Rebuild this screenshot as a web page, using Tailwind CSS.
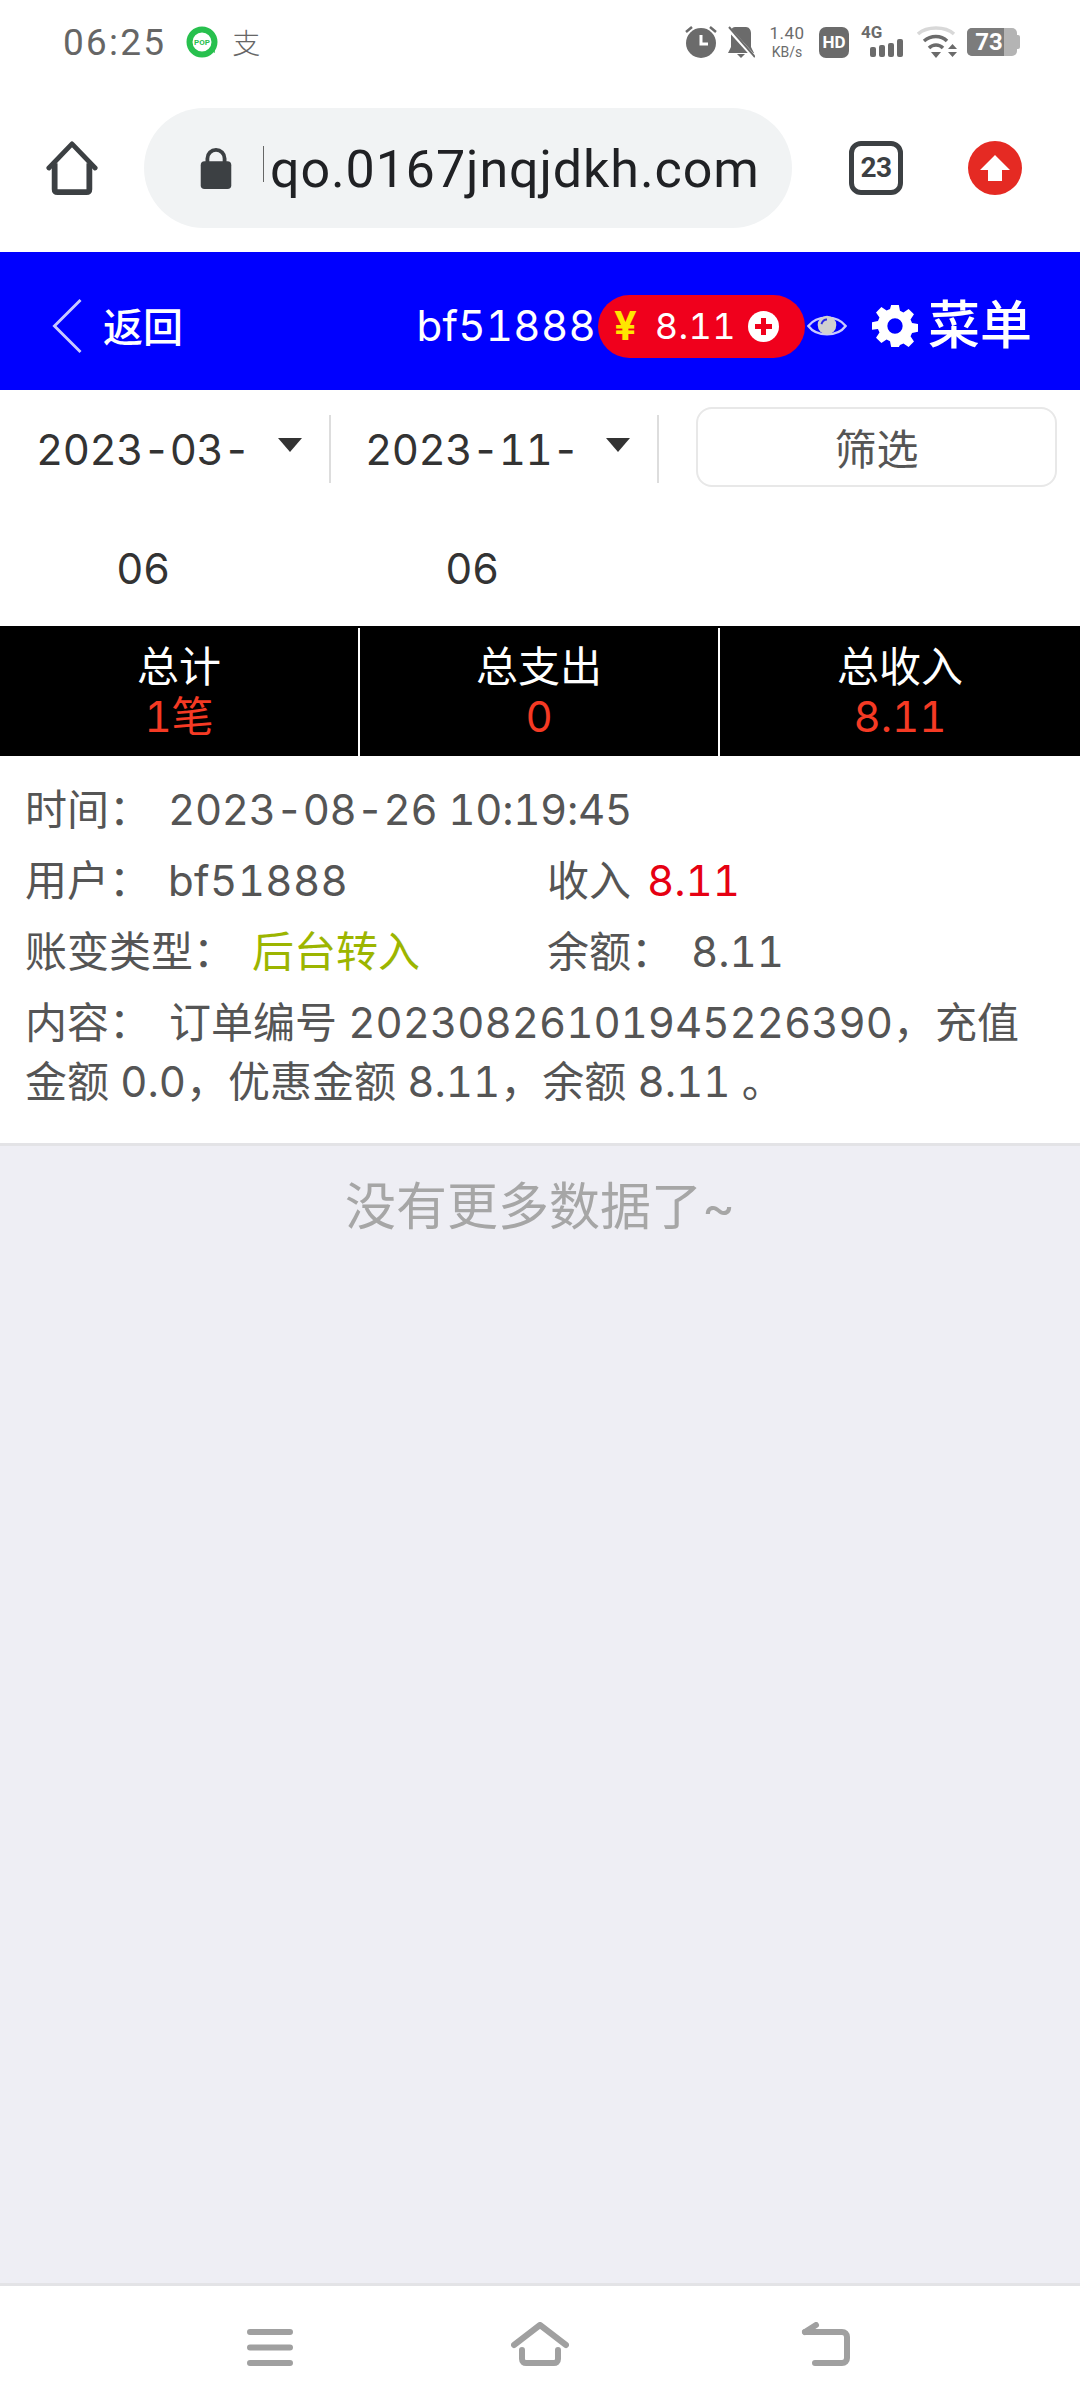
<!DOCTYPE html>
<html lang="zh-CN">
<head>
    <meta charset="UTF-8">
    <meta name="viewport" content="width=device-width, initial-scale=1.0">
    <title>账变记录</title>
    <script src="https://cdn.jsdelivr.net/npm/@tailwindcss/browser@4"></script>
</head>
<body class="bg-white font-['Inter','Noto_Sans_CJK_SC',sans-serif] tabular-nums">
<div class="w-[1080px] h-[2408px] flex flex-col overflow-hidden">

    <!-- Status bar -->
    <div class="h-[88px] shrink-0 flex items-center justify-between pl-[63px] pr-[60px] pb-[4px] text-[#666]">
        <div class="flex items-center">
            <span class="text-[37px] leading-none font-['Roboto',sans-serif] tracking-[2.2px]">06:25</span>
            <svg class="ml-[20px]" width="32" height="32" viewBox="0 0 32 32"><circle cx="16" cy="16" r="12.5" fill="#fff" stroke="#28c04e" stroke-width="6"/><path d="M24 24l5 3-1-6z" fill="#28c04e"/><text x="16" y="19" text-anchor="middle" font-size="8" font-weight="700" fill="#28c04e" font-family="Roboto">POP</text></svg>
            <span class="ml-[14px] text-[28px] leading-none font-['Noto_Sans_CJK_SC'] font-light">支</span>
        </div>
        <div class="flex items-center">
            <svg width="34" height="34" viewBox="0 0 34 34"><circle cx="17" cy="18" r="15" fill="#6b6b6b"/><path d="M17 10v9h7" fill="none" stroke="#fff" stroke-width="3"/><path d="M2 7l6-5M32 7l-6-5" stroke="#6b6b6b" stroke-width="2.5"/></svg>
            <svg class="ml-[9px]" width="28" height="34" viewBox="0 0 28 34"><path d="M8 2h11c3 0 5 3 5 6v14l3 6H1l3-6V8c0-3 1-6 4-6zM10 29h8l-4 4z" fill="#6b6b6b"/><path d="M1 3l26 29" stroke="#fff" stroke-width="4"/><path d="M2 2l26 30" stroke="#6b6b6b" stroke-width="2"/></svg>
            <div class="ml-[12px] w-[40px] flex flex-col items-center text-[#6b6b6b] font-['Roboto',sans-serif]">
                <span class="text-[17px] leading-[20px] tracking-[0.5px]">1.40</span>
                <span class="text-[14px] leading-[18px]">KB/s</span>
            </div>
            <div class="ml-[12px] w-[30px] h-[31px] rounded-[7px] bg-[#6b6b6b] flex items-center justify-center text-white text-[17px] font-bold leading-none font-['Roboto',sans-serif]">HD</div>
            <div class="ml-[12px] w-[44px] h-[34px] relative text-[#6b6b6b] font-['Roboto',sans-serif]">
                <span class="absolute left-0 top-[-3px] text-[17px] font-bold leading-[20px]">4G</span>
                <svg class="absolute left-0 top-0" width="44" height="34" viewBox="0 0 44 34"><rect x="9" y="22" width="6" height="10" rx="2" fill="#6b6b6b"/><rect x="18" y="20" width="6" height="12" rx="2" fill="#6b6b6b"/><rect x="27" y="18" width="6" height="14" rx="2" fill="#6b6b6b"/><rect x="36" y="14" width="6" height="18" rx="2" fill="#6b6b6b"/></svg>
            </div>
            <svg class="ml-[12px]" width="40" height="34" viewBox="0 0 40 34"><path d="M1 9C10 1 28 1 37 9" fill="none" stroke="#d8d8d8" stroke-width="3.5"/><path d="M7 16c7-6 17-6 23 0" fill="none" stroke="#6b6b6b" stroke-width="3.5"/><path d="M12 23c4-4 10-4 14 0" fill="none" stroke="#6b6b6b" stroke-width="3.5"/><path d="M14 27h10l-5 6z" fill="#6b6b6b"/><path d="M31 24h9l-4.500-5zM31 27h9l-4.500 5z" fill="#6b6b6b"/></svg>
            <div class="ml-[10px] relative w-[50px] h-[28px] rounded-[5px] overflow-hidden bg-[#b4b4b4] flex items-center">
                <div class="absolute left-0 top-0 h-full w-[37px] bg-[#7c7c7c]"></div>
                <span class="relative w-[44px] text-center text-white text-[24px] font-bold leading-none font-['Roboto',sans-serif]">73</span>
            </div>
            <div class="w-[3px] h-[14px] rounded-r-[2px] bg-[#b4b4b4]"></div>
        </div>
    </div>

    <!-- Browser bar -->
    <div class="h-[164px] shrink-0 flex items-center pl-[45px] pb-[4px]">
        <svg width="54" height="54" viewBox="0 0 54 56"><path d="M3 28L27 3l24 25" fill="none" stroke="#3c4043" stroke-width="5" stroke-linecap="round" stroke-linejoin="round"/><path d="M9 23v27c0 2 1 3 3 3h30c2 0 3-1 3-3V23" fill="none" stroke="#3c4043" stroke-width="6"/></svg>
        <div class="ml-[45px] w-[648px] h-[120px] rounded-full bg-[#f1f3f4] flex items-center pl-[56px]">
            <svg width="32" height="42" viewBox="0 0 32 44"><path d="M7 16V12a9 9 0 0 1 18 0v4" fill="none" stroke="#3c4043" stroke-width="4"/><rect x="0" y="15" width="32" height="29" rx="4" fill="#3c4043"/></svg>
            <span class="ml-[38px] mt-[3px] text-[52px] leading-none text-[#202124] font-['Roboto',sans-serif] relative tracking-[0.9px]">qo.0167jnqjdkh.com<span class="absolute left-[-7px] top-[2px] h-[36px] border-l border-[#666]"></span></span>
        </div>
        <div class="ml-[57px] w-[54px] h-[54px] rounded-[12px] border-[5px] border-[#3c4043] flex items-center justify-center text-[#3c4043] text-[28px] font-bold leading-none font-['Roboto',sans-serif] tracking-[-0.5px]">23</div>
        <div class="ml-[65px] w-[54px] h-[54px] rounded-full bg-[#e52a23] flex items-center justify-center">
            <svg width="30" height="28" viewBox="0 0 30 28"><path d="M15 1L30 16H22V27H8V16H0z" fill="#fff"/></svg>
        </div>
    </div>

    <!-- Blue header -->
    <div class="h-[138px] shrink-0 bg-[#0000ff] flex items-center justify-between pl-[52px] pr-[48px] pt-[10px] text-white">
        <div class="flex items-center">
            <svg width="30" height="56" viewBox="0 0 30 58"><path d="M29 2L2 29l27 27" fill="none" stroke="#c9c9ff" stroke-width="3"/></svg>
            <span class="ml-[21px] text-[40px] leading-none mt-[4px] font-medium">返回</span>
        </div>
        <div class="flex items-center">
            <span class="text-[42px] leading-none tracking-[0.3px]">bf51888</span>
            <div class="ml-[2px] w-[207px] h-[63px] rounded-full bg-[#f0001c] flex items-center pl-[16px]">
                <span class="text-[40px] font-bold text-[#ffe600] leading-none">¥</span>
                <span class="ml-[18px] text-[36px] leading-none tracking-[0.4px]">8.11</span>
                <svg class="ml-[12px]" width="31" height="31" viewBox="0 0 31 31"><circle cx="15.500" cy="15.500" r="15.500" fill="#fff"/><path d="M15.500 7v17M7 15.500h17" stroke="#f0001c" stroke-width="5"/></svg>
            </div>
            <svg class="ml-[1px]" width="42" height="28" viewBox="0 0 42 30"><path d="M1 15C10 3 32 3 41 15 32 27 10 27 1 15z" fill="none" stroke="#c9c9ff" stroke-width="2.500"/><circle cx="21" cy="14" r="10" fill="#d0d0d0"/><path d="M15 13c1-3 3-5 6-5" fill="none" stroke="#2a2ae0" stroke-width="2"/></svg>
            <svg class="ml-[24px]" width="46" height="48" viewBox="0 0 24 24" fill="#fff"><path fill-rule="evenodd" d="M10 1h4l.6 3.100 1.800.8 2.700-1.800 2.800 2.800-1.800 2.700.8 1.800 3.100.6v4l-3.100.6-.8 1.800 1.800 2.700-2.800 2.800-2.700-1.800-1.800.8L14 23h-4l-.6-3.100-1.800-.8-2.700 1.800-2.800-2.800 1.800-2.700-.8-1.800L0 14v-4l3.100-.6.800-1.800L2.100 4.900l2.800-2.800 2.700 1.800 1.800-.8zM12 8a4 4 0 1 0 0 8 4 4 0 0 0 0-8z"/></svg>
            <span class="ml-[10px] text-[52px] leading-none font-medium">菜单</span>
        </div>
    </div>

    <!-- Filter row -->
    <div class="h-[236px] shrink-0 flex items-start text-[#333]">
        <div class="w-[331px] pt-[30px] pl-[40px] relative">
            <div class="w-[206px] flex flex-col items-center text-[42px] leading-[59px] tracking-[-0.5px] whitespace-nowrap">
                <span>2023-03-</span>
                <span class="mt-[60px]">06</span>
            </div>
            <div class="absolute left-[278px] top-[48px] w-0 h-0 border-x-[12px] border-x-transparent border-t-[14px] border-t-[#333]"></div>
            <div class="absolute right-0 top-[25px] w-[2px] h-[68px] bg-[#ddd]"></div>
        </div>
        <div class="w-[328px] pt-[30px] pl-[38px] relative">
            <div class="w-[206px] flex flex-col items-center text-[42px] leading-[59px] tracking-[-0.5px] whitespace-nowrap">
                <span>2023-11-</span>
                <span class="mt-[60px]">06</span>
            </div>
            <div class="absolute left-[275px] top-[48px] w-0 h-0 border-x-[12px] border-x-transparent border-t-[14px] border-t-[#333]"></div>
            <div class="absolute right-0 top-[25px] w-[2px] h-[68px] bg-[#ddd]"></div>
        </div>
        <button class="ml-[37px] mt-[17px] w-[361px] h-[80px] rounded-[16px] border-2 border-[#e8e8e8] text-[42px] text-[#555] leading-none pt-[6px]">筛选</button>
    </div>

    <!-- Totals -->
    <div class="h-[130px] shrink-0 bg-black grid grid-cols-3 text-center pt-[2px]">
        <div class="border-r-2 border-white flex flex-col justify-center">
            <span class="text-[42px] leading-[50px] text-white">总计</span>
            <span class="text-[42px] leading-[50px] text-[#f53a24]">1笔</span>
        </div>
        <div class="border-r-2 border-white flex flex-col justify-center">
            <span class="text-[42px] leading-[50px] text-white">总支出</span>
            <span class="text-[42px] leading-[50px] text-[#f53a24]">0</span>
        </div>
        <div class="flex flex-col justify-center">
            <span class="text-[42px] leading-[50px] text-white">总收入</span>
            <span class="text-[42px] leading-[50px] text-[#f53a24]">8.11</span>
        </div>
    </div>

    <!-- Record -->
    <div class="h-[387px] shrink-0 px-[25px] pt-[24px] text-[42px] leading-[59px] text-[#555] flex flex-col gap-[12px]">
        <div class="flex"><span class="w-[143px]">时间：</span><span class="tracking-[-0.3px]">2023-08-26 10:19:45</span></div>
        <div class="flex">
            <div class="w-[522px] flex"><span class="w-[143px]">用户：</span><span class="tracking-[0.4px]">bf51888</span></div>
            <div class="flex"><span>收入</span><span class="ml-[16px] text-[#e60012]">8.11</span></div>
        </div>
        <div class="flex">
            <div class="w-[522px] flex"><span class="w-[227px]">账变类型：</span><span class="text-[#9cb500]">后台转入</span></div>
            <div class="flex"><span class="w-[144px]">余额：</span><span>8.11</span></div>
        </div>
        <p><span class="inline-block w-[144px]">内容：</span>订单编号 20230826101945226390，充值金额 0.0，优惠金额 8.11，余额 8.11 。</p>
    </div>

    <!-- Empty area -->
    <div class="flex-1 bg-[#eeeef4] border-t-[3px] border-[#e3e3e6] text-center pt-[28px] text-[51px] leading-[66px] text-[#a6a6a6]">没有更多数据了~</div>

    <!-- Navigation bar -->
    <div class="h-[125px] shrink-0 border-t-[3px] border-[#e3e3e6] flex items-start pl-[247px]">
        <svg class="mt-[43px]" width="46" height="37" viewBox="0 0 46 37"><path d="M3 3h40M3 18.500h40M3 34h40" stroke="#a0a0a0" stroke-width="6" stroke-linecap="round"/></svg>
        <svg class="mt-[36px] ml-[218px]" width="58" height="44" viewBox="0 0 58 44"><path d="M3 23L29 3l26 20" fill="none" stroke="#a0a0a0" stroke-width="6" stroke-linecap="round" stroke-linejoin="round"/><path d="M11 28v9c0 3 2 4 4 4h28c2 0 4-1 4-4v-9" fill="none" stroke="#a0a0a0" stroke-width="6" stroke-linecap="round"/></svg>
        <svg class="mt-[36px] ml-[232px]" width="50" height="44" viewBox="0 0 50 44"><path d="M4 10h37c3 0 5 2 5 5v21c0 3-2 5-5 5H14" fill="none" stroke="#a0a0a0" stroke-width="6" stroke-linecap="round"/><path d="M4 10l11-7" stroke="#a0a0a0" stroke-width="6" stroke-linecap="round"/></svg>
    </div>
</div>
</body>
</html>
